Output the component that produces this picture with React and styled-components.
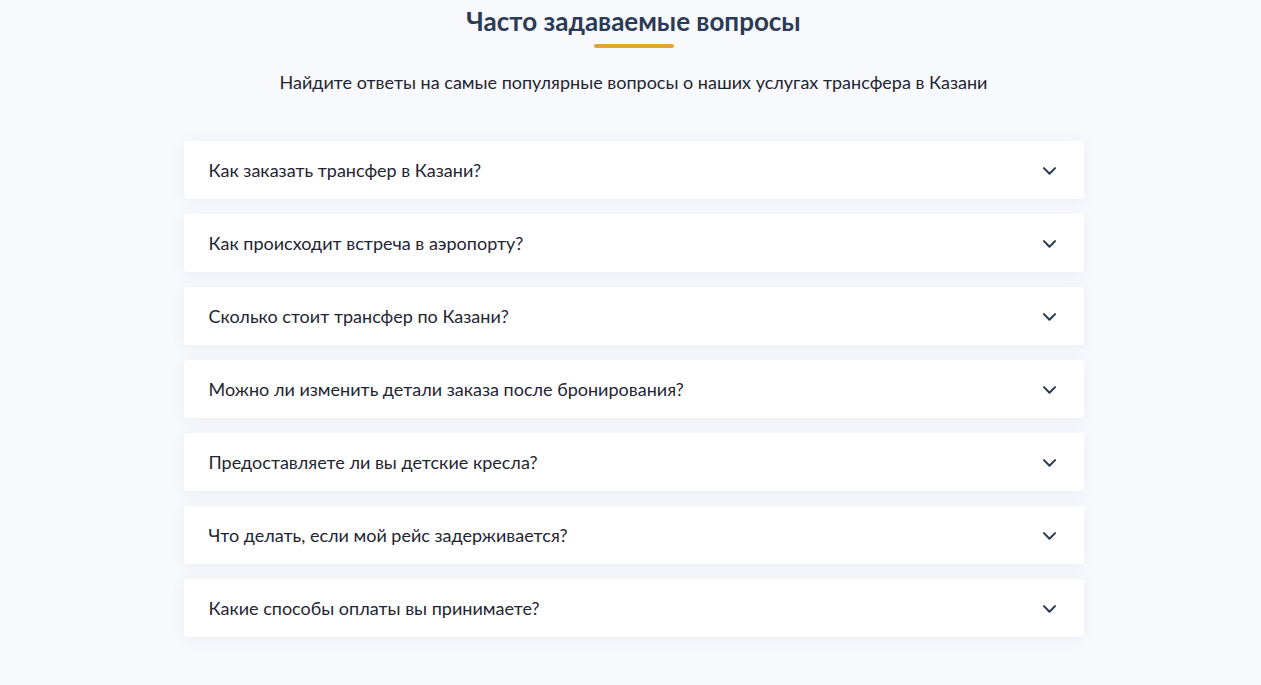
import React, { useState } from "react";
import styled, { createGlobalStyle } from "styled-components";

const GlobalStyle = createGlobalStyle`
  html, body {
    margin: 0;
    padding: 0;
    background: #f8f9fc;
    font-family: Lato, "Noto Sans", sans-serif;
  }
`;

const faqs = [
  "Как заказать трансфер в Казани?",
  "Как происходит встреча в аэропорту?",
  "Сколько стоит трансфер по Казани?",
  "Можно ли изменить детали заказа после бронирования?",
  "Предоставляете ли вы детские кресла?",
  "Что делать, если мой рейс задерживается?",
  "Какие способы оплаты вы принимаете?",
];

function Chevron() {
  return (
    <svg width="19" height="19" viewBox="0 0 24 24" fill="none">
      <path
        d="M5 9l7 7 7-7"
        stroke="#2b3a55"
        strokeWidth="2.6"
        strokeLinecap="round"
        strokeLinejoin="round"
      />
    </svg>
  );
}

function App() {
  const [open, setOpen] = useState(null);

  return (
    <>
      <GlobalStyle />
      <Section>
        <Title>Часто задаваемые вопросы</Title>
        <Underline />
        <Subtitle>
          Найдите ответы на самые популярные вопросы о наших услугах трансфера в
          Казани
        </Subtitle>
        <List>
          {faqs.map((q, i) => (
            <Item key={q}>
              <Question onClick={() => setOpen(open === i ? null : i)}>
                <span>{q}</span>
                <Icon open={open === i}>
                  <Chevron />
                </Icon>
              </Question>
            </Item>
          ))}
        </List>
      </Section>
    </>
  );
}

const Section = styled.section`
  display: flex;
  flex-direction: column;
  align-items: center;
  padding: 5px 0 48px 6px;
`;

const Title = styled.h2`
  margin: 0;
  font-size: 26px;
  font-weight: 700;
  line-height: 32px;
  color: #2b3a55;
`;

const Underline = styled.div`
  width: 80px;
  height: 4px;
  border-radius: 2px;
  background: #e6a42b;
  margin-top: 7px;
`;

const Subtitle = styled.p`
  margin: 22px 0 0;
  font-size: 18px;
  line-height: 24px;
  color: #1f2533;
`;

const List = styled.div`
  width: 900px;
  margin-top: 47px;
  display: flex;
  flex-direction: column;
  gap: 15px;
`;

const Item = styled.div`
  background: #ffffff;
  border-radius: 4px;
  box-shadow: 0 2px 14px rgba(90, 115, 170, 0.09);
`;

const Question = styled.button`
  width: 100%;
  height: 58px;
  display: flex;
  align-items: center;
  justify-content: space-between;
  padding: 0 25px;
  border: none;
  background: transparent;
  cursor: pointer;
  font-family: inherit;
  font-size: 18px;
  color: #1f2533;
  text-align: left;
`;

const Icon = styled.span`
  display: flex;
  transform: rotate(${(p) => (p.open ? "180deg" : "0deg")});
  transition: transform 0.2s;
`;

export default App;
